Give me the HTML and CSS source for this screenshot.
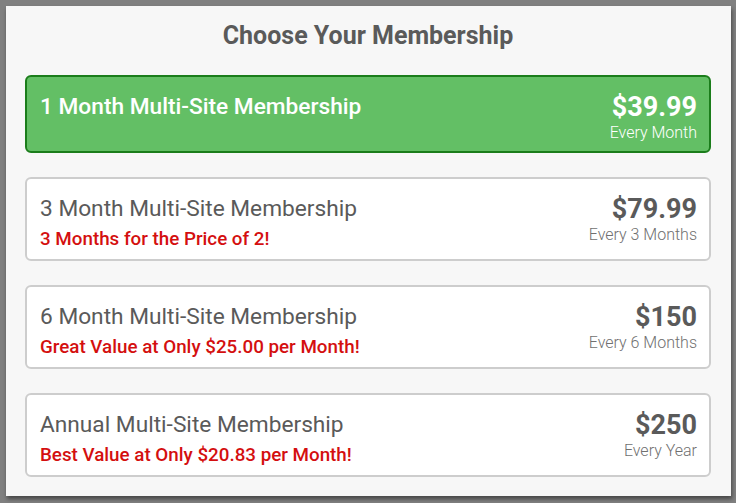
FILE: index.html
```html
<!DOCTYPE html>
<html>
	<head>
		<title>Choose Your Membership</title>
		<link rel="stylesheet" href="styles.css">
	</head>
	<body>
		<div class="panel">
			<h1 class="heading">Choose Your Membership</h1>
			<div class="plans">
				<div class="plan selected">
					<div class="plan-info">
						<div class="plan-name">1 Month Multi-Site Membership</div>
					</div>
					<div class="plan-price">
						<div class="amount">$39.99</div>
						<div class="period">Every Month</div>
					</div>
				</div>
				<div class="plan">
					<div class="plan-info">
						<div class="plan-name">3 Month Multi-Site Membership</div>
						<div class="plan-note">3 Months for the Price of 2!</div>
					</div>
					<div class="plan-price">
						<div class="amount">$79.99</div>
						<div class="period">Every 3 Months</div>
					</div>
				</div>
				<div class="plan">
					<div class="plan-info">
						<div class="plan-name">6 Month Multi-Site Membership</div>
						<div class="plan-note">Great Value at Only $25.00 per Month!</div>
					</div>
					<div class="plan-price">
						<div class="amount">$150</div>
						<div class="period">Every 6 Months</div>
					</div>
				</div>
				<div class="plan">
					<div class="plan-info">
						<div class="plan-name">Annual Multi-Site Membership</div>
						<div class="plan-note">Best Value at Only $20.83 per Month!</div>
					</div>
					<div class="plan-price">
						<div class="amount">$250</div>
						<div class="period">Every Year</div>
					</div>
				</div>
			</div>
		</div>
	</body>
</html>
```
FILE: styles.css
```css
* {
	box-sizing: border-box;
}
html,body {
	width: 100%;
	height: 100%;
}
body {
	margin: 0;
	padding: 6px 5px 0 6px;
	background-color: #808080;
	font-family: Roboto, "Liberation Sans", sans-serif;
	overflow: hidden;
}
.panel {
	background-color: #f7f7f7;
	padding: 14px 20px 19px 19px;
	box-shadow: 1px 3px 4px rgba(0, 0, 0, 0.45);
}
.heading {
	margin: 0 0 23px 0;
	text-align: center;
	font-size: 25px;
	line-height: 32px;
	font-weight: 700;
	color: #5a5a5a;
}
.plans {
	display: flex;
	flex-direction: column;
	gap: 24px;
}
.plan {
	display: flex;
	justify-content: space-between;
	align-items: flex-start;
	padding: 17px 12px 9px 13px;
	background-color: #fff;
	border: 2px solid #cdcdcd;
	border-radius: 6px;
	color: #5a5a5a;
}
.plan.selected {
	background-color: #63bf65;
	border-color: #1b7d1b;
	color: #fff;
	padding-bottom: 8px;
}
.plan-name {
	font-size: 22.7px;
	line-height: 26px;
	font-weight: 400;
}
.selected .plan-name {
	font-weight: 500;
}
.plan-note {
	margin-top: 6px;
	font-size: 18.8px;
	line-height: 22px;
	font-weight: 500;
	color: #d40f0f;
}
.plan-price {
	margin-top: -3px;
	text-align: right;
}
.amount {
	font-size: 27px;
	line-height: 32px;
	font-weight: 700;
}
.period {
	font-size: 16px;
	line-height: 20px;
	font-weight: 300;
	color: #707070;
}
.selected .period {
	color: #fff;
}
```
